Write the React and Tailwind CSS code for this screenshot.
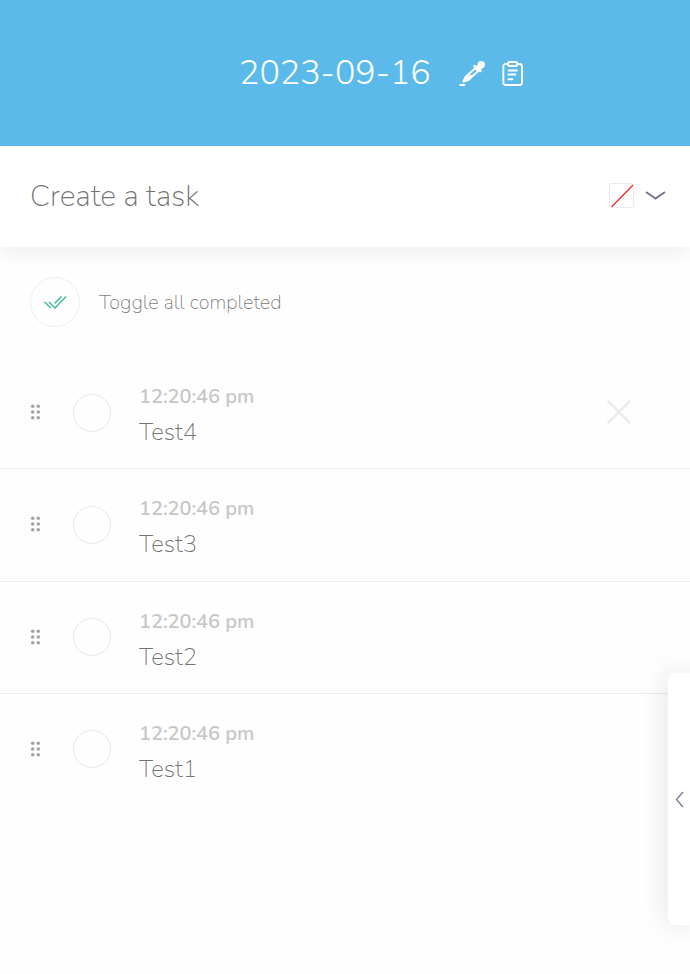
const tasks = ['Test4', 'Test3', 'Test2', 'Test1'];

function Pipette() {
  return (
    <svg className="h-7 w-7" viewBox="0 0 28 28" fill="none" stroke="#fff" strokeWidth="2" strokeLinecap="round" strokeLinejoin="round">
      <path d="M2.300 25h4" strokeWidth="2.200" />
      <path d="M18 7.500 8 16.500 5.500 21.500l5-2L21 10.500" />
      <path d="m8 16.500 6-.500-3 3.500-5.500 2z" fill="#fff" />
      <path d="m16.500 6 6 5" strokeWidth="2.400" />
      <path d="m20 8.500 3-3" strokeWidth="5.500" />
      <circle cx="23.200" cy="4.800" r="3.700" fill="#fff" stroke="none" />
    </svg>
  );
}

function Clipboard() {
  return (
    <svg className="h-[28px] w-[24px]" viewBox="0 0 24 28" fill="none" stroke="#fff" strokeWidth="1.9" strokeLinecap="round" strokeLinejoin="round">
      <path d="M8 4H6a2.500 2.500 0 0 0-2.700 2.500v16A2.500 2.500 0 0 0 6 25h13.500a2.500 2.500 0 0 0 2.500-2.500v-16A2.500 2.500 0 0 0 19.500 4h-2" />
      <rect x="8.200" y="2" width="9" height="4" rx="1.300" />
      <path d="M8.500 10.500h8.500M8.500 14.500h7M8.500 19.300h4" />
    </svg>
  );
}

function Grip() {
  return (
    <svg className="mb-px h-4 w-[11px]" viewBox="0 0 11 16" fill="#a3a3a3">
      {[2.2, 8, 13.8].map((y) => (
        <g key={y}>
          <circle cx="2.700" cy={y} r="1.800" />
          <circle cx="8.300" cy={y} r="1.800" />
        </g>
      ))}
    </svg>
  );
}

function Task({ name, first, last }) {
  return (
    <li className={`flex h-[112.3px] items-center border-b pl-[30px] pr-[59px] ${last ? 'border-transparent' : 'border-[#ebebeb]'}`}>
      <Grip />
      <span className="ml-8 h-[38px] w-[38px] shrink-0 rounded-full border border-[#e8e8e8]" />
      <div className="ml-7 grow pt-[4.6px]">
        <p className="h-[35.05px] text-[20px] font-semibold leading-9 tracking-[-0.06px] text-[#c6c6c6]">12:20:46 pm</p>
        <p className="h-[36.45px] text-[24px] font-extralight leading-9 text-[#4d4d4d]/80">{name}</p>
      </div>
      {first && (
        <svg className="mb-px h-6 w-6" viewBox="0 0 24 24" stroke="#ebebeb" strokeWidth="2.500" strokeLinecap="round">
          <path d="m1.500 1.500 21 21m0-21-21 21" />
        </svg>
      )}
    </li>
  );
}

export default function App() {
  return (
    <main className="relative h-[974px] w-full overflow-hidden bg-[#fefefe] font-['Nunito','Lato',sans-serif]">
      <header className="relative z-10 flex h-[146px] items-center bg-[#5bbae9] pl-[239px] text-white">
        <h1 className="w-[219px] whitespace-nowrap text-[34px] font-light leading-none">2023-09-16</h1>
        <span className="pt-px"><Pipette /></span>
        <span className="ml-[14px] pt-px"><Clipboard /></span>
      </header>
      <section className="relative flex h-[101px] items-center bg-white pb-[3px] pl-[30px] pr-[24px] shadow-[0_4px_20px_rgba(0,0,0,0.08)]">
        <p className="grow pt-[3px] text-[30px] font-extralight leading-none text-[#4d4d4d]/80">Create a task</p>
        <span className="h-[25px] w-[25px] rounded-[3px] border border-[#e9e9ee]">
          <svg className="h-[23px] w-[23px]" viewBox="0 0 23 23" stroke="#f02828" strokeWidth="1.300">
            <path d="M1.500 23 23 1" />
          </svg>
        </span>
        <svg className="ml-[11px] h-[11px] w-[21px]" viewBox="0 0 21 11" fill="none" stroke="#76758f" strokeWidth="2">
          <path d="m1 2 9.500 6.500L20 2" />
        </svg>
      </section>
      <section className="flex h-[109.92px] items-center pb-[0.92px] pl-[30px]">
        <span className="flex h-[50px] w-[50px] items-center justify-center rounded-full border border-[#eee]">
          <svg className="h-[14px] w-6" viewBox="0 0 24 14" fill="none" stroke="#4bbda4" strokeWidth="1.600">
            <path d="m1.500 7 6.500 6M6 7l6 6L23 1.500M11.500 8.500l7-7" />
          </svg>
        </span>
        <p className="ml-[19px] pt-[2px] text-[20px] font-extralight text-[#4d4d4d]/75">Toggle all completed</p>
      </section>
      <ul>
        {tasks.map((name, i) => (
          <Task key={name} name={name} first={i === 0} last={i === tasks.length - 1} />
        ))}
      </ul>
      <aside className="absolute right-0 top-[673px] flex h-[252px] w-[22px] items-center rounded-l-lg bg-white pl-[7px] shadow-[0_0_28px_rgba(0,0,0,0.13)]">
        <svg className="h-[17px] w-[9px]" viewBox="0 0 9 17" fill="none" stroke="#76758f" strokeWidth="1.200">
          <path d="M8 1 1.500 8.500 8 16" />
        </svg>
      </aside>
    </main>
  );
}
